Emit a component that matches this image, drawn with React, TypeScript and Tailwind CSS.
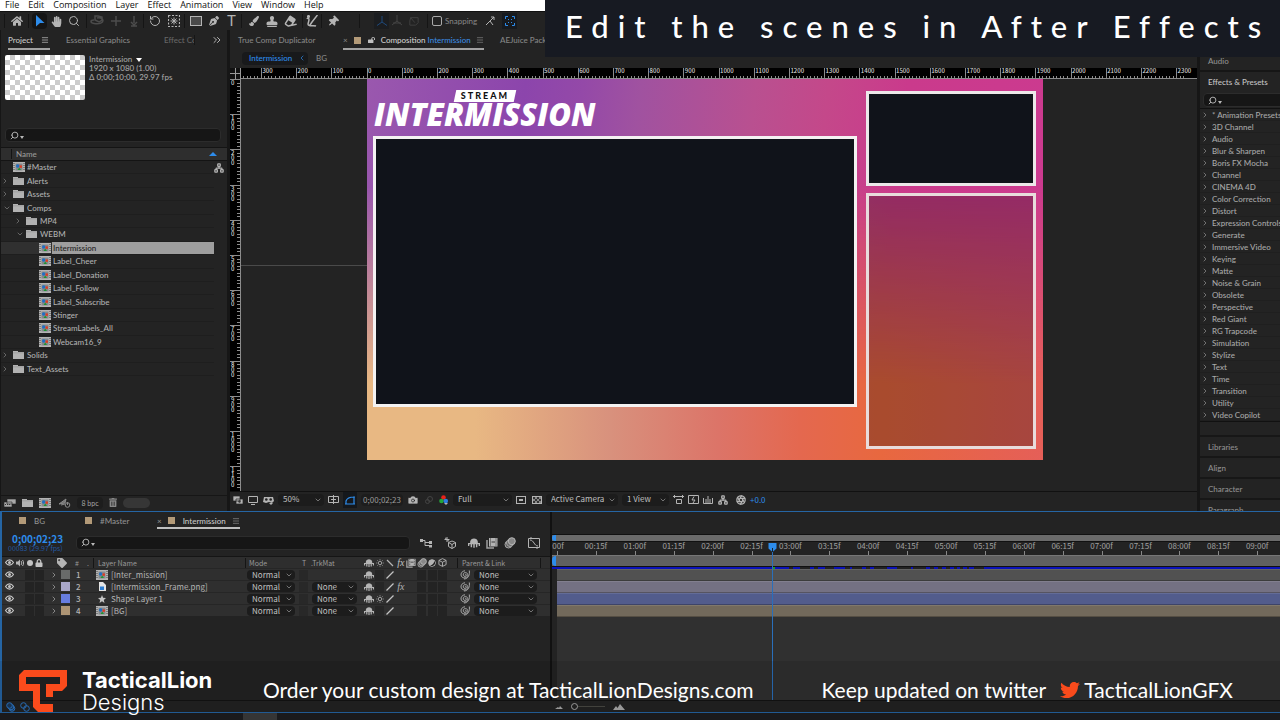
import type { ReactNode } from "react";
import { FaTwitter, FaHandPaper, FaStamp, FaEraser, FaPaintBrush, FaPenNib, FaThumbtack, FaHome, FaTrashAlt, FaLock, FaLockOpen, FaTag } from "react-icons/fa";
import { ChevronDown, ChevronRight, ChevronLeft, ChevronsRight, Menu, Search, RotateCcw, Network, Aperture, Camera } from "lucide-react";

const menus = ["File", "Edit", "Composition", "Layer", "Effect", "Animation", "View", "Window", "Help"];

const projectItems = [
  { name: "#Master", depth: 0, kind: "comp" },
  { name: "Alerts", depth: 0, kind: "folder" },
  { name: "Assets", depth: 0, kind: "folder" },
  { name: "Comps", depth: 0, kind: "open" },
  { name: "MP4", depth: 1, kind: "folder" },
  { name: "WEBM", depth: 1, kind: "open" },
  { name: "Intermission", depth: 2, kind: "comp", selected: true },
  { name: "Label_Cheer", depth: 2, kind: "comp" },
  { name: "Label_Donation", depth: 2, kind: "comp" },
  { name: "Label_Follow", depth: 2, kind: "comp" },
  { name: "Label_Subscribe", depth: 2, kind: "comp" },
  { name: "Stinger", depth: 2, kind: "comp" },
  { name: "StreamLabels_All", depth: 2, kind: "comp" },
  { name: "Webcam16_9", depth: 2, kind: "comp" },
  { name: "Solids", depth: 0, kind: "folder" },
  { name: "Text_Assets", depth: 0, kind: "folder" },
];

const indents = ["pl-0", "pl-[13px]", "pl-[26px]"];

const effects = [
  "* Animation Presets", "3D Channel", "Audio", "Blur & Sharpen", "Boris FX Mocha", "Channel", "CINEMA 4D",
  "Color Correction", "Distort", "Expression Controls", "Generate", "Immersive Video", "Keying", "Matte",
  "Noise & Grain", "Obsolete", "Perspective", "Red Giant", "RG Trapcode", "Simulation", "Stylize", "Text",
  "Time", "Transition", "Utility", "Video Copilot",
];

const layers = [
  { id: 1, name: "[Inter_mission]", kind: "comp", swatch: "bg-[#686a69]", bar: "bg-[#515151]", trk: false, fx: false, sun: false },
  { id: 2, name: "[Intermission_Frame.png]", kind: "png", swatch: "bg-[#a9a7c9]", bar: "bg-[#747183]", trk: true, fx: true, sun: false },
  { id: 3, name: "Shape Layer 1", kind: "shape", swatch: "bg-[#677de0]", bar: "bg-[#525c8c]", trk: true, fx: false, sun: true },
  { id: 4, name: "[BG]", kind: "comp", swatch: "bg-[#ad9474]", bar: "bg-[#72695b]", trk: true, fx: false, sun: false },
];

const layerGrid = "grid grid-cols-[14px_9px_10px_10px_12px_14px_22px_152px_53px_11px_55px_84px_9px_94px] items-center text-left";

const times = [
  ":00f", "00:15f", "01:00f", "01:15f", "02:00f", "02:15f", "03:00f", "03:15f", "04:00f", "04:15f",
  "05:00f", "05:15f", "06:00f", "06:15f", "07:00f", "07:15f", "08:00f", "08:15f", "09:00f",
];

const cacheGaps = [
  [237, 4], [248, 10], [262, 4], [273, 9], [293, 5], [300, 10], [314, 4], [322, 10], [332, 3], [345, 14], [361, 13], [378, 4], [386, 4], [394, 4], [402, 3], [408, 3], [415, 2], [422, 10],
];

function CompIcon() {
  return (
    <svg className="w-3 h-2.5 shrink-0" viewBox="0 0 12 10">
      <rect width="12" height="10" fill="#b4b4b4" />
      <rect x="2.5" y="1.5" width="7" height="7" fill="#83888c" />
      <path d="M1 1v8M11 1v8" stroke="#444" strokeDasharray="1 1" />
      <circle cx="4.700" cy="4" r="1.700" fill="#1f6fc4" />
      <rect x="6.500" y="3.400" width="2.400" height="2.400" fill="#e0391f" />
      <path d="M4.500 8l1.700-2.500L8 8z" fill="#1f9430" />
    </svg>
  );
}

function FolderIcon() {
  return (
    <svg className="w-[11px] h-2 shrink-0" viewBox="0 0 11 8">
      <path d="M0 0h5v1h6v7H0z" fill="#b2b2b2" />
      <path d="M0 1.800h11" stroke="#8b8b8b" strokeWidth=".5" />
    </svg>
  );
}

function EyeIcon() {
  return (
    <svg className="w-[9px] h-[7px]" viewBox="0 0 9 7">
      <path d="M.5 3.500C2 1.200 3.200.8 4.500.8s2.500.4 4 2.700c-1.500 2.300-2.700 2.700-4 2.700S2 5.800.5 3.500z" fill="none" stroke="#c4c4c4" strokeWidth="1.200" />
      <circle cx="4.500" cy="3.500" r="1.500" fill="#c4c4c4" />
    </svg>
  );
}

function ShyIcon({ className = "w-2.5 h-2" }: { className?: string }) {
  return (
    <svg className={className} viewBox="0 0 10 8">
      <path d="M1.800 4.500V3C2-.8 8-.8 8.200 3v1.500z" fill="#b4b4b4" />
      <path d="M0 4.500h10M.5 4v2.500M9.500 4v2.500M5 3v5M2.800 4v3.500M7.200 4v3.500" stroke="#b4b4b4" strokeWidth="1.200" />
    </svg>
  );
}

function SunIcon() {
  return (
    <svg className="w-2 h-2" viewBox="0 0 8 8">
      <circle cx="4" cy="4" r="1.700" fill="none" stroke="#999" />
      <path d="M4 0v1.500M4 6.500V8M0 4h1.500M6.500 4H8M1.200 1.200l1 1M5.800 5.800l1 1M6.800 1.200l-1 1M2.200 5.800l-1 1" stroke="#999" strokeWidth=".7" />
    </svg>
  );
}

function BlurIcon({ className }: { className: string }) {
  return (
    <svg className={className} viewBox="0 0 12 12">
      <circle cx="4.500" cy="7.500" r="3.500" fill="#555" stroke="#a6a6a6" />
      <circle cx="6" cy="6" r="3.500" fill="#666" stroke="#a6a6a6" />
      <circle cx="7.800" cy="4.200" r="3.500" fill="#888" stroke="#b8b8b8" />
    </svg>
  );
}

function CubeIcon({ className }: { className: string }) {
  return (
    <svg className={className} viewBox="0 0 10 10" fill="none" stroke="#b4b4b4">
      <path d="M5 .7l4 2v4.600l-4 2-4-2V2.700zM1 2.700l4 2 4-2M5 4.700v4.600" />
    </svg>
  );
}

function FilmIcon({ className }: { className: string }) {
  return (
    <svg className={className} viewBox="0 0 12 12">
      <path d="M1 3v8h7" fill="none" stroke="#a0a0a0" strokeWidth="1.500" />
      <rect x="3" y="1" width="8.500" height="8.500" fill="#b4b4b4" />
      <path d="M4.500 1.500v8M10 1.500v8" stroke="#3a3a3a" strokeDasharray="1 1" />
      <path d="M5.500 5h3.500" stroke="#3a3a3a" />
    </svg>
  );
}

function Swirl() {
  return (
    <svg className="w-2.5 h-2.5" viewBox="0 0 10 10" fill="none" stroke="#a8a8a8">
      <path d="M5 4.500c1-.8 2 .6 1 1.500-1.200 1-3.200 0-2.700-1.900C3.900 2 7.200 1.900 7.700 4.500c.5 3-3.500 4.600-5.700 2.500C-.2 4.700 1.500 1 5 .8M9.300.5c.6 4-.8 8.300-5.300 8.500" />
    </svg>
  );
}

function SearchBox({ label, className }: { label: string; className: string }) {
  return (
    <label className={`flex items-center gap-px pl-1 bg-[#161616] border border-[#2c2c2c] rounded-sm ${className}`}>
      <Search className="w-[9px] h-[9px] -scale-x-100 text-[#b8b8b8]" strokeWidth={2.5} />
      <span className="border-x-2 border-t-3 border-x-transparent border-t-[#b8b8b8] mt-1" />
      <input aria-label={label} className="min-w-0 flex-1 h-full bg-transparent outline-none" />
    </label>
  );
}

function Dropdown({ label, value, className }: { label: string; value: string; className: string }) {
  return (
    <span className={`relative flex items-center bg-[#1c1c1c] rounded-sm ${className}`}>
      <select aria-label={label} className="appearance-none w-full h-full pl-[5px] pb-0.5 leading-[10px] bg-transparent text-[#c0c0c0] outline-none">
        <option>{value}</option>
      </select>
      <ChevronDown className="absolute right-0.5 w-2 h-2 text-[#a0a0a0] pointer-events-none" />
    </span>
  );
}

function Tool({ label, children, className = "" }: { label: string; children: ReactNode; className?: string }) {
  return (
    <button aria-label={label} className={`flex items-center justify-center h-4 shrink-0 ${className}`}>
      {children}
    </button>
  );
}

function Divider() {
  return <span className="w-px h-3.5 bg-[#151515] shrink-0" />;
}

function Toolbar() {
  return (
    <div className="h-[19px] shrink-0 flex items-center bg-[#232323] border-t border-[#111] text-[#b4b4b4] pl-1">
      <Divider />
      <Tool label="Home" className="w-[23px]"><FaHome className="w-3 h-3" /></Tool>
      <Divider />
      <Tool label="Selection" className="w-[15px] ml-[3px] bg-[#151515] rounded-sm">
        <svg className="w-2.5 h-3" viewBox="0 0 10 12"><path d="M1 0l8.500 8H5L1 11.500z" fill="#2d8ceb" /></svg>
      </Tool>
      <Tool label="Hand" className="w-[18px]"><FaHandPaper className="w-[11px] h-[11px]" /></Tool>
      <Tool label="Zoom" className="w-[17px]"><Search className="w-3 h-3" /></Tool>
      <span className="w-1" />
      <Divider />
      <span className="flex text-[#4c4c4c]">
        <Tool label="Orbit camera" className="w-5">
          <svg className="w-3.5 h-3" viewBox="0 0 14 12" fill="none" stroke="currentColor" strokeWidth="1.500"><path d="M4 5C0 5 0 8 4 8.500c6 1 9-1 9-3S9 2 7 3M5 1v4l4 2 3-2V2L8 1z" /></svg>
        </Tool>
        <Tool label="Pan camera" className="w-[18px]">
          <svg className="w-3 h-3" viewBox="0 0 12 12" stroke="currentColor" strokeWidth="1.500"><path d="M6 1v10M1 6h10" /></svg>
        </Tool>
        <Tool label="Dolly camera" className="w-[18px]">
          <svg className="w-3 h-3" viewBox="0 0 12 12" stroke="currentColor" strokeWidth="1.500" fill="none"><path d="M6 1v7M3 7l3 3 3-3M3 11h6" /></svg>
        </Tool>
      </span>
      <Divider />
      <Tool label="Rotation" className="w-[22px]"><RotateCcw className="w-3 h-3" /></Tool>
      <Tool label="Pan behind" className="w-4">
        <svg className="w-3 h-3" viewBox="0 0 12 12" stroke="currentColor" fill="none"><rect x=".5" y=".5" width="11" height="11" strokeDasharray="2 1.500" strokeWidth="1.200" /><path d="M6 2.500v7M2.500 6h7M3.500 3.500l5 5M8.500 3.500l-5 5" /></svg>
      </Tool>
      <span className="w-0.5" />
      <Divider />
      <Tool label="Rectangle" className="w-[21px]"><span className="w-3 h-2.5 bg-[#4a4a4a] border border-[#b4b4b4]" /></Tool>
      <Tool label="Pen" className="w-4"><FaPenNib className="w-2.5 h-2.5" /></Tool>
      <Tool label="Type" className="w-[19px] text-[15px] leading-none font-[Roboto]">T</Tool>
      <Divider />
      <Tool label="Brush" className="w-6"><FaPaintBrush className="w-2.5 h-2.5" /></Tool>
      <Tool label="Clone stamp" className="w-3"><FaStamp className="w-3 h-[11px]" /></Tool>
      <Tool label="Eraser" className="w-6"><FaEraser className="w-3 h-3 -rotate-12" /></Tool>
      <Divider />
      <Tool label="Roto brush" className="w-[18px]"><svg className="w-3 h-3" viewBox="0 0 12 12" fill="none" stroke="currentColor" strokeWidth="1.500"><path d="M11.500 0L6 7M6 7l-2 3M1 4c1-2 2-1 2 1l-1 4c0 3 6 1 8 2" /><circle cx="2.500" cy="1.500" r=".8" fill="currentColor" /></svg></Tool>
      <Divider />
      <Tool label="Puppet pin" className="w-[21px]"><FaThumbtack className="w-2.5 h-[11px] rotate-45" /></Tool>
      <span className="w-4" />
      <Divider />
      <span className="w-3.5" />
      <Tool label="Local axis" className="w-[15px] bg-[#1b1d20]"><svg className="w-3 h-3" viewBox="0 0 12 12" fill="none" stroke="#1f4a7c"><path d="M6 1v6L1 10.500M6 7l5 3.500" /></svg></Tool>
      <Tool label="World axis" className="w-4 text-[#444]"><svg className="w-3 h-3" viewBox="0 0 12 12" fill="none" stroke="currentColor"><path d="M6 0v6L1 10M6 6l5 4M2 8h8" /></svg></Tool>
      <Tool label="View axis" className="w-[18px] text-[#444]"><svg className="w-2.5 h-3" viewBox="0 0 12 12" fill="none" stroke="currentColor"><path d="M2 2h9v6L8 11H1V6zM2 2l5 6" /></svg></Tool>
      <span className="w-1" />
      <Divider />
      <label className="flex items-center gap-[3px] ml-1 text-[#888] font-[Lato]">
        <input type="checkbox" className="appearance-none w-2.5 h-2.5 border border-[#aaa] rounded-xs" />
        Snapping
      </label>
      <Tool label="Snap edges" className="w-[25px]"><svg className="w-2.5 h-2.5" viewBox="0 0 10 10" fill="none" stroke="currentColor"><path d="M1 9l4-4 3 4M5 5l4-4M6 1h3v3" /></svg></Tool>
      <Tool label="Snap extents" className="w-[15px] bg-[#171a1e]"><svg className="w-2.5 h-2.5" viewBox="0 0 10 10" fill="none" stroke="#2d8ceb"><path d="M.5 3V.5H3M7 .5h2.500V3M9.500 7v2.500H7M3 9.500H.5V7M3 3l1 1M7 3L6 4M3 7l1-1M7 7L6 6" /></svg></Tool>
    </div>
  );
}

function ProjectPanel() {
  return (
    <section className="w-[227px] shrink-0 flex flex-col bg-[#232323] border-l border-[#161616] font-[Lato] font-medium">
      <div className="h-5 flex items-center shrink-0">
        <button className="flex items-center gap-2 h-[19px] pt-0.5 ml-[7px] border-b-2 border-[#a2a2a2] text-[#c8c8c8] pr-px">
          Project <Menu className="w-2 h-2" />
        </button>
        <button className="ml-4 text-[#858585]">Essential Graphics</button>
        <button className="ml-auto w-[31px] overflow-hidden whitespace-nowrap text-left text-[#666] border-r border-[#161616]">Effect Controls</button>
        <ChevronsRight className="w-3 h-3 ml-4 mr-1 text-[#b4b4b4]" />
      </div>
      <div className="flex gap-1 mt-[5px] ml-1 text-[#a5a5a5] leading-[9px]">
        <div className="w-20 h-[45px] rounded-xs bg-[repeating-conic-gradient(#ccc_0_25%,#fff_0_50%)] bg-size-[10px_10px]" />
        <div>
          <h2 className="flex items-center gap-1">Intermission <span className="border-x-3 border-t-4 border-x-transparent border-t-white" /></h2>
          <p>1920 x 1080 (1.00)</p>
          <p>Δ 0;00;10;00, 29.97 fps</p>
        </div>
      </div>
      <SearchBox label="Search project" className="mt-[28px] ml-1 mr-1.5 h-3.5 shrink-0" />
      <div className="flex items-center h-[14px] mt-[5px] shrink-0 pl-2.5 bg-[#2e2e2e] border-y border-[#141414] text-[#9a9a9a]">
        <span className="border-l border-[#141414] pl-1">Name</span>
        <span className="ml-auto mr-2.5 border-x-4 border-b-4 border-x-transparent border-b-[#2d8ceb]" />
      </div>
      <div className="flex shrink-0">
        <ul className="flex-1 h-[215px] flex flex-col text-[#b0b0b0]">
          {projectItems.map((item) => (
            <li key={item.name} className={`flex-1 flex items-center border-b border-[#1e1e1e] ${indents[item.depth]} ${item.selected ? "bg-[#303030]" : ""}`}>
              <span className="w-3 flex justify-center shrink-0 text-[#888]">
                {item.kind === "folder" && <ChevronRight className="w-2 h-2 -ml-1" />}
                {item.kind === "open" && <ChevronDown className="w-2 h-2" />}
              </span>
              {item.kind === "comp" ? <CompIcon /> : <FolderIcon />}
              <span className={item.selected ? "flex-1 h-full flex items-center ml-px pl-px bg-[#9e9e9e] text-[#222]" : item.kind === "comp" ? "ml-0.5" : "ml-[3px]"}>{item.name}</span>
            </li>
          ))}
        </ul>
        <div className="w-[13px] pt-px"><Network className="w-2.5 h-2.5 mt-px text-[#b4b4b4]" strokeWidth={3} /></div>
      </div>
      <div className="mt-auto h-4 pb-0.5 flex items-center gap-1.5 pl-[3px] border-t border-[#161616] text-[#b0b0b0]">
        <Tool label="Interpret footage"><svg className="w-3 h-2.5" viewBox="0 0 12 10"><path d="M3 1h9v5H3zM0 4h8v5H0z" fill="#a8a8a8" stroke="#232323" strokeWidth=".6" /><path d="M1 6.500h6" stroke="#333" strokeDasharray="1 1" /></svg></Tool>
        <Tool label="New folder"><FolderIcon /></Tool>
        <Tool label="New composition"><CompIcon /></Tool>
        <Tool label="Project settings" className="ml-0.5"><svg className="w-3 h-2.5" viewBox="0 0 12 10" fill="none" stroke="#8a8a8a"><path d="M0 6l7-5-1 4zM2 7l4-1" fill="#777" /><circle cx="8.500" cy="7" r="2.300" /><path d="M8.500 4v3" /></svg></Tool>
        <button className="w-[26px] h-3 text-[7px] text-[#9a9a9a] bg-[#1d1d1d] rounded-sm">8 bpc</button>
        <Tool label="Delete"><FaTrashAlt className="w-2 h-[9px] text-[#888]" /></Tool>
        <span className="w-[27px] h-2.5 rounded-full bg-[#363636]" />
      </div>
    </section>
  );
}

function HorizontalRuler() {
  return (
    <svg className="w-full h-[11px] shrink-0 bg-black" shapeRendering="crispEdges">
      {Array.from({ length: 268 }, (_, i) => i - 35).map((i) => (
        <path key={i} d={`M${137 + i * 3.52} ${i % 10 === 0 ? 0 : 8}V11`} stroke="#8c8c8c" />
      ))}
      {Array.from({ length: 27 }, (_, i) => i - 3).map((n) => (
        <text key={n} x={138 + n * 35.2} y="5" fontSize="6" fontWeight="500" fill="#d8d8d8">{Math.abs(n * 100)}</text>
      ))}
      <path d="M0 10.500H967" stroke="#8c8c8c" />
      <path d="M0 0h11v11H0z" fill="#111" />
      <path d="M0 5.500h11M5.500 0v11M10.500 0v11" stroke="#999" />
    </svg>
  );
}

function VerticalRuler() {
  return (
    <svg className="w-[11px] h-full shrink-0 bg-black" shapeRendering="crispEdges">
      {Array.from({ length: 118 }, (_, i) => i).map((i) => (
        <path key={i} d={`M${i % 10 === 0 ? 0 : 7} ${i * 3.52 + 0.5}H11`} stroke="#8c8c8c" />
      ))}
      {Array.from({ length: 12 }, (_, n) =>
        String(n * 100).split("").map((digit, k) => (
          <text key={`${n}-${k}`} x="1" y={6 + n * 35.2 + k * 5} fontSize="6" fontWeight="500" fill="#d8d8d8">{digit}</text>
        )),
      )}
      <path d="M10.500 0v500" stroke="#8c8c8c" />
    </svg>
  );
}

function Artboard() {
  return (
    <div className="relative isolate w-[676px] h-[381px] shrink-0 flex gap-[9px] pl-1.5 pr-[7px] bg-[linear-gradient(97deg,#9a58ae_0%,#8c45ac_22%,#9449a8_30%,#a052a0_38%,#b95090_54%,#c4488a_64%,#ca3a8c_75%,#cc3a90_100%)]">
      <div className="absolute inset-0 -z-10 bg-[linear-gradient(to_right,#e8b883_0%,#e8b883_16%,#d8917d_36%,#dc7468_52%,#e4684f_64%,#e8683f_76%,#e55f58_100%)] mask-[linear-gradient(to_bottom,transparent_28%,black_80%)]" />
      <div className="flex-1 flex flex-col">
        <div className="h-[57px] pt-[11px] pl-px text-white">
          <p className="relative isolate w-[60px] h-3 ml-[81px] text-center text-[9px] leading-3 font-black tracking-[2px] text-[#111] font-[Lato]">
            <span className="absolute inset-0 -z-10 bg-white -skew-x-12" />
            STREAM
          </p>
          <h1 className="text-[31px] leading-6 font-extrabold italic whitespace-nowrap font-['Open_Sans']">INTERMISSION</h1>
        </div>
        <div className="h-[271px] border-3 border-[#f4f2f2] bg-[#10131a]" />
      </div>
      <div className="w-[170px] flex flex-col gap-[7px] pt-3">
        <div className="h-[95px] border-3 border-[#ece8e9] bg-[#10131a]" />
        <div className="h-64 border-3 border-[#e8dcdc] bg-black/27" />
      </div>
    </div>
  );
}

function ViewerControls() {
  return (
    <div className="h-5 pb-[3px] shrink-0 flex items-center border-t border-[#111] text-[#b4b4b4] pl-[3px] gap-1">
      <Tool label="Always preview"><svg className="w-2.5 h-2" viewBox="0 0 10 8"><path d="M0 0h7v5H0zM3 3h7v5H3z" fill="#b4b4b4" stroke="#232323" strokeWidth=".7" /><circle cx="6.500" cy="5.500" r="1.200" fill="#333" /></svg></Tool>
      <Tool label="Display" className="ml-px"><svg className="w-2.5 h-[9px]" viewBox="0 0 10 9" fill="none" stroke="#b4b4b4"><path d="M.5.5h9v6h-9zM3 8.500h4" /></svg></Tool>
      <Tool label="Stereo view" className="ml-px"><svg className="w-[11px] h-[9px]" viewBox="0 0 11 9"><path d="M1 1h9l1 4-2 2-3-1-3 1-3-1z" fill="#b4b4b4" /><circle cx="3.300" cy="3.500" r="1.300" fill="#232323" /><circle cx="7.700" cy="3.500" r="1.300" fill="#232323" /><path d="M6 7h4L8 9z" fill="#b4b4b4" /></svg></Tool>
      <Dropdown label="Magnification" value="50%" className="w-[46px] h-3" />
      <Tool label="Grid options"><svg className="w-[11px] h-2.5" viewBox="0 0 11 10" fill="none" stroke="#b4b4b4"><path d="M.5 1.500h10v6H.5zM5.500 0v9M3 4.500h5" /></svg></Tool>
      <Tool label="Mask visibility" className="w-3.5 bg-[#15181c]"><svg className="w-2.5 h-[9px]" viewBox="0 0 10 9" fill="none" stroke="#2d8ceb" strokeWidth="1.200"><path d="M1 8V5C2 2 5 1 9 1v7H1M0 8h2M8 1h2M8 8h2" /></svg></Tool>
      <button className="w-[42px] h-3 bg-[#1d1d1d] text-[#9a9a9a] rounded-sm">0;00;02;23</button>
      <Tool label="Snapshot"><Camera className="w-3 h-3 fill-[#b4b4b4] text-[#232323]" strokeWidth={1.5} /></Tool>
      <Tool label="Show snapshot" className="w-3"><svg className="w-2 h-2" viewBox="0 0 8 8" fill="none" stroke="#444"><circle cx="5" cy="3" r="2.500" /><circle cx="2.500" cy="5.500" r="2" /></svg></Tool>
      <Tool label="Channels"><svg className="w-2.5 h-2.5" viewBox="0 0 10 10"><circle cx="4.500" cy="2.500" r="2.300" fill="#e8231a" /><circle cx="2.500" cy="6" r="2.300" fill="#22a63a" /><circle cx="6.800" cy="6" r="2.300" fill="#2d7de0" /><path d="M5 8h4L7 10z" fill="#b4b4b4" /></svg></Tool>
      <Dropdown label="Resolution" value="Full" className="w-[59px] h-3" />
      <Tool label="Region of interest"><span className="w-2.5 h-2 border border-[#b4b4b4] p-0.5"><span className="block w-full h-full bg-[#b4b4b4]" /></span></Tool>
      <Tool label="Transparency grid" className="ml-0.5"><span className="w-2.5 h-2 border border-[#b4b4b4] bg-[repeating-conic-gradient(#888_0_25%,#333_0_50%)] bg-size-[4px_4px]" /></Tool>
      <Dropdown label="Camera" value="Active Camera" className="w-[72px] h-3" />
      <Dropdown label="View layout" value="1 View" className="w-[47px] h-3" />
      <Tool label="Pixel aspect"><svg className="w-[11px] h-2.5" viewBox="0 0 11 10" fill="none" stroke="#b4b4b4"><path d="M0 1.500h11M1.500 0v3M9.500 0v3M3.500 4.500h5v4h-5z" /></svg></Tool>
      <Tool label="Fast previews"><svg className="w-[11px] h-2.5" viewBox="0 0 11 10" fill="none" stroke="#b4b4b4"><path d="M.5.5h10v8H.5zM6 1.500L4 5h3L5 8" /></svg></Tool>
      <Tool label="Timeline"><svg className="w-2.5 h-2.5" viewBox="0 0 10 10" fill="none" stroke="#b4b4b4"><path d="M.5 3v5.500h9V3M3 8V4M5 8V1M7 8V4" /></svg></Tool>
      <Tool label="Flowchart" className="ml-px"><Network className="w-2.5 h-2.5" strokeWidth={3} /></Tool>
      <Tool label="Exposure" className="ml-1"><Aperture className="w-2.5 h-2.5" strokeWidth={3} /></Tool>
      <span className="text-[#2d8ceb]">+0.0</span>
    </div>
  );
}

function CompositionPanel() {
  return (
    <section className="flex-1 min-w-0 flex flex-col bg-[#232323] mx-[3px]">
      <div className="h-5 shrink-0 flex items-center whitespace-nowrap text-[#858585] font-[Lato] font-medium">
        <button className="ml-2 w-[105px] text-left">True Comp Duplicator</button>
        <div className="w-[141px] h-[19px] pt-0.5 flex items-center border-b-2 border-[#a2a2a2]">
          <button aria-label="Close">×</button>
          <span className="w-[7px] h-[7px] ml-1.5 bg-[#b39a78]" />
          <FaLockOpen className="w-[7px] h-2 ml-[7px] mr-1.5 text-[#c0c0c0]" />
          <span className="text-[#d0d0d0]">Composition <span className="text-[#3b8be0]">Intermission</span></span>
          <Menu className="w-2 h-2 ml-auto" />
        </div>
        <button className="ml-4">AEJuice Pack Manager</button>
      </div>
      <div className="h-[14px] shrink-0 flex items-center ml-3 mt-px mb-[3px] text-[#858585] font-[Lato] font-medium">
        <span className="w-[66px] h-[13px] flex items-center justify-between pl-[7px] pr-0.5 rounded-sm bg-[#18191b] text-[#2d8ceb]">
          Intermission <ChevronLeft className="w-2 h-2" />
        </span>
        <span className="ml-2">BG</span>
      </div>
      <HorizontalRuler />
      <div className="flex-1 min-h-0 flex">
        <VerticalRuler />
        <div className="relative isolate flex-1 min-w-0 flex items-start pl-[126px] overflow-hidden">
          <span className="absolute left-0 top-[186px] -z-10 w-32 h-px bg-[#4a4a4a]" />
          <Artboard />
        </div>
      </div>
      <ViewerControls />
    </section>
  );
}

function EffectsPanel() {
  return (
    <aside className="w-20 shrink-0 flex flex-col bg-[#232323] overflow-hidden whitespace-nowrap text-[#909090] font-[Lato] font-medium">
      <h2 className="h-[42px] shrink-0 flex items-end pb-1 pl-2 border-b-2 border-[#161616]">Audio</h2>
      <h2 className="h-5 shrink-0 flex items-center pl-2 text-[#c4c4c4]">Effects &amp; Presets</h2>
      <SearchBox label="Search effects" className="h-3.5 shrink-0 ml-[3px] mt-px -mr-1" />
      <ul className="mt-px border-y border-[#111] text-[#a8a8a8]">
        {effects.map((name) => (
          <li key={name} className="h-3 flex items-center gap-[3px] pl-px border-b border-[#1f1f1f]">
            <ChevronRight className="w-2 h-2 text-[#999] shrink-0" />
            {name}
          </li>
        ))}
      </ul>
      <div className="h-[15px] shrink-0 border-b-2 border-[#171717]" />
      {["Libraries", "Align", "Character", "Paragraph"].map((name) => (
        <h2 key={name} className="h-[21px] shrink-0 flex items-center pl-2 border-b-2 border-[#171717]">{name}</h2>
      ))}
    </aside>
  );
}

function LayerTable() {
  return (
    <table className="block w-full text-[#9a9a9a]">
      <thead className="block">
        <tr className={`${layerGrid} h-3 bg-[#2e2e2e] border-t border-[#151515] text-[7px]`}>
          <th className="pl-[3px]"><EyeIcon /></th>
          <th><svg className="w-2 h-2" viewBox="0 0 8 8"><path d="M0 2.500h2L4 .5v7L2 5.500H0z" fill="#b4b4b4" /><path d="M5 2c1 1 1 3 0 4M6.500 1c1.500 2 1.500 4 0 6" fill="none" stroke="#b4b4b4" /></svg></th>
          <th><span className="block w-1.5 h-1.5 ml-0.5 rounded-full bg-[#c4c4c4]" /></th>
          <th><FaLock className="w-2 h-2 text-[#c4c4c4]" /></th>
          <th />
          <th><FaTag className="w-2.5 h-2.5 text-[#b4b4b4]" /></th>
          <th className="pl-1 font-normal flex justify-between pr-1"><span>#</span><span>.</span></th>
          <th className="pl-1 font-normal border-l border-[#151515]">Layer Name</th>
          <th className="pl-[3px] font-normal border-l border-[#151515]">Mode</th>
          <th className="pl-1 font-normal">T</th>
          <th className="pl-0.5 font-normal">.TrkMat</th>
          <th className="grid grid-cols-8 items-center justify-items-center">
            <ShyIcon />
            <SunIcon />
            <svg className="w-2 h-2" viewBox="0 0 8 8"><path d="M1 1l6 6" stroke="#b4b4b4" strokeWidth="1.200" /></svg>
            <i className="font-[Liberation_Serif] font-normal text-[10px] leading-none text-[#c0c0c0]">fx</i>
            <FilmIcon className="w-2.5 h-2.5" />
            <BlurIcon className="w-2.5 h-2.5" />
            <svg className="w-2 h-2" viewBox="0 0 8 8"><circle cx="4" cy="4" r="3.300" fill="#b4b4b4" stroke="#b4b4b4" /><path d="M4 1a3 3 0 010 6 4 4 0 000-6z" fill="#232323" transform="rotate(45 4 4)" /></svg>
            <CubeIcon className="w-[9px] h-[9px]" />
          </th>
          <th />
          <th className="pl-1 mr-2.5 font-normal border-x border-[#151515]">Parent &amp; Link</th>
        </tr>
      </thead>
      <tbody className="block">
        {layers.map((layer) => (
          <tr key={layer.id} className={`${layerGrid} h-3 bg-[#2f2f2f] border-t border-[#262626] text-[#b4b4b4]`}>
            <td className="pl-[3px]"><EyeIcon /></td>
            <td />
            <td><span className="block w-[9px] h-2.5 bg-[#232323]" /></td>
            <td><span className="block w-[9px] h-2.5 bg-[#232323]" /></td>
            <td><ChevronRight className="w-2 h-2 ml-[5px]" /></td>
            <td className="pl-0.5"><span className={`block w-[9px] h-[9px] ml-0.5 ${layer.swatch}`} /></td>
            <td className="pl-[5px] font-medium">{layer.id}</td>
            <td className="flex items-center gap-[3px] pl-[3px]">
              <span className="w-3 flex justify-center">
                {layer.kind === "comp" && <CompIcon />}
                {layer.kind === "png" && <svg className="w-2 h-[9px]" viewBox="0 0 8 9"><path d="M1 0h4l3 3v6H1z" fill="#e4e4e4" /><path d="M2 4.500h4V8H2z" fill="#2d7dd0" /></svg>}
                {layer.kind === "shape" && <svg className="w-2 h-2" viewBox="0 0 8 8"><path d="M4 0l1.100 2.800L8 3 5.800 4.900 6.500 8 4 6.300 1.500 8l.7-3.100L0 3l2.900-.2z" fill="#c4c4c4" /></svg>}
              </span>
              {layer.name}
            </td>
            <td className="pl-0.5"><Dropdown label={`Mode of layer ${layer.id}`} value="Normal" className="w-12 h-2.5" /></td>
            <td><span className="block w-[9px] h-2.5 ml-px bg-[#282828]" /></td>
            <td className="pl-[3px]">{layer.trk && <Dropdown label={`Track matte of layer ${layer.id}`} value="None" className="w-[45px] h-2.5" />}</td>
            <td className="grid grid-cols-8 items-center justify-items-center">
              <ShyIcon />
              {layer.sun ? <SunIcon /> : <span className="w-[9px] h-2.5 bg-[#262626]" />}
              <svg className="w-2 h-2" viewBox="0 0 8 8"><path d="M.5 7.500l7-7" stroke="#c4c4c4" strokeWidth="1.200" /></svg>
              <i className="font-[Liberation_Serif] text-[10px] leading-none">{layer.fx ? "fx" : ""}</i>
              <span />
              <span className="w-[9px] h-2.5 bg-[#232323]" />
              <span className="w-[9px] h-2.5 bg-[#232323]" />
              <span className="w-[9px] h-2.5 bg-[#232323]" />
            </td>
            <td />
            <td className="flex items-center gap-1 pl-[3px]">
              <Swirl />
              <Dropdown label={`Parent of layer ${layer.id}`} value="None" className="w-[63px] h-2.5" />
            </td>
          </tr>
        ))}
      </tbody>
    </table>
  );
}

function TimeGraph() {
  return (
    <div className="relative flex-1 min-w-0 flex flex-col bg-[#232323] overflow-hidden">
      <div className="mt-[22px] h-1.5 bg-[#6a6a6a] border-y border-[#111] box-content flex justify-start">
        <span className="w-1 rounded-l-full bg-[#2d8ceb]" />
      </div>
      <svg className="w-full h-[13px]">
        {times.map((time, i) => (
          <g key={time}>
            <text x={5 + i * 38.9} y="7" textAnchor="middle" fontSize="8" fill="#a0a0a0">{time}</text>
            <path d={`M${Math.round(5 + i * 38.9) + 0.5} 9v4`} stroke="#888" />
          </g>
        ))}
      </svg>
      <div className="h-3 bg-[#606060] border-y border-y-[#111] border-t-[#777]"><span className="block w-1 h-full rounded-l-full bg-[#2d8ceb]" /></div>
      <svg className="w-full h-0.5 bg-[#0b12b8]" shapeRendering="crispEdges">
        {cacheGaps.map(([x, w]) => <path key={x} d={`M${x} 1h${w}`} stroke="#222" strokeWidth="2" />)}
        <path d="M220 1h3" stroke="#1e9c2a" strokeWidth="2" />
      </svg>
      <div className="flex-1 ml-[5px] bg-[#303030]">
        {layers.map((layer) => (
          <div key={layer.id} className={`h-3 border-t border-t-white/10 border-b border-b-black/25 ${layer.bar}`} />
        ))}
      </div>
      <div className="absolute left-[220px] top-[31px] bottom-0 w-px bg-[#2a6fba]">
        <svg className="absolute -left-1 top-0 w-[9px] h-[9px]" viewBox="0 0 9 9"><path d="M.5 0h8v5.500L4.500 9l-4-3.500z" fill="#2d8ceb" /><path d="M4.500 5v4" stroke="#123" /></svg>
      </div>
    </div>
  );
}

function Timeline() {
  return (
    <section className="h-[202px] shrink-0 flex flex-col bg-[#232323] border-y border-l-2 border-[#2565a4]">
      <div className="flex-1 min-h-0 flex">
        <div className="w-[550px] shrink-0 flex flex-col border-r-2 border-[#111]">
          <div className="h-[17px] flex items-center text-[#909090] font-[Lato] font-medium">
            <span className="w-[7px] h-[7px] ml-[17px] mr-2 bg-[#b39a78]" />
            <button className="w-[51px] text-left">BG</button>
            <span className="w-[7px] h-[7px] mr-2 bg-[#b39a78]" />
            <button className="w-[57px] text-left">#Master</button>
            <div className="h-[17px] pt-0.5 w-[83px] flex items-center border-b-2 border-[#c0c0c0]">
              <button aria-label="Close" className="mr-1.5">×</button>
              <span className="w-[7px] h-[7px] mr-2 bg-[#b39a78]" />
              <span className="text-[#c8c8c8]">Intermission</span>
              <Menu className="w-2 h-2 ml-auto" />
            </div>
          </div>
          <div className="h-[27px] flex items-center">
            <div className="w-[74px] pl-1.5">
              <p className="pl-1 text-[10px] leading-[11px] font-bold text-[#2d8ceb]">0;00;02;23</p>
              <p className="text-[7px] leading-[9px] text-[#2458a0]">00083 (29.97 fps)</p>
            </div>
            <SearchBox label="Search layers" className="w-[334px] h-3.5" />
            <div className="flex-1 flex items-center justify-between pl-2.5 pr-2">
              <Tool label="Mini flowchart"><svg className="w-3 h-2.5" viewBox="0 0 12 10" fill="none" stroke="#b4b4b4"><path d="M0 2.500h5v5h4M5 4.500h4" /><path d="M9 3h3v3H9zM9 7h3v2.500H9zM0 1h3v3H0z" fill="#b4b4b4" stroke="none" /></svg></Tool>
              <Tool label="Draft 3D" className="ml-1.5"><svg className="w-3 h-3" viewBox="0 0 12 12" fill="none" stroke="#b4b4b4"><path d="M8 4l3.500 1.500v4L8 11.500l-3.500-2v-4zM4.500 5.500L8 7.500l3.500-2M8 7.500v4M3 0v5M.5 2.500h5M1 .8l4 3.500" /></svg></Tool>
              <Tool label="Hide shy layers" className="ml-1.5"><ShyIcon className="w-3 h-2.5" /></Tool>
              <Tool label="Frame blending"><FilmIcon className="w-3 h-3" /></Tool>
              <Tool label="Motion blur"><BlurIcon className="w-3 h-3" /></Tool>
              <Tool label="Graph editor" className="ml-1.5 mr-0.5"><svg className="w-3 h-3" viewBox="0 0 12 12" fill="none" stroke="#b4b4b4"><path d="M.5 1.500h11v9H.5zM2 3c4 0 4 6 8 6M3 0v2M9 10v2" /></svg></Tool>
            </div>
          </div>
          <LayerTable />
        </div>
        <TimeGraph />
      </div>
      <div className="h-[12px] shrink-0 flex items-center pl-1 border-t border-[#141414]">
        <Tool label="Switches"><svg className="w-2.5 h-2.5" viewBox="0 0 10 10" fill="#1c3a5c" stroke="#2d78c8"><circle cx="6" cy="6.500" r="2.800" /><circle cx="5" cy="5" r="2.800" /><circle cx="3.500" cy="3.500" r="2.800" /></svg></Tool>
        <Tool label="Modes" className="ml-1"><svg className="w-2.5 h-2.5" viewBox="0 0 10 10" fill="none" stroke="#2d78c8"><circle cx="3.500" cy="3.500" r="2.800" /><circle cx="6.500" cy="6.500" r="2.800" /></svg></Tool>
        <svg className="w-2 h-1 ml-[525px] mr-2" viewBox="0 0 8 4"><path d="M0 4l3-2 1 1 1-2 3 3z" fill="#aaa" /></svg>
        <input type="range" aria-label="Timeline zoom" defaultValue={0} className="appearance-none w-[34px] h-px bg-[#4a4a44] [&::-webkit-slider-thumb]:appearance-none [&::-webkit-slider-thumb]:w-[7px] [&::-webkit-slider-thumb]:h-[7px] [&::-webkit-slider-thumb]:rounded-full [&::-webkit-slider-thumb]:border [&::-webkit-slider-thumb]:border-[#aaa] [&::-webkit-slider-thumb]:bg-[#232323]" />
        <svg className="w-3 h-1.5 ml-2" viewBox="0 0 12 6"><path d="M0 6l3-4 1.500 2L7 0l5 6z" fill="#aaa" /></svg>
      </div>
    </section>
  );
}

function Branding() {
  return (
    <footer className="absolute inset-x-0 bottom-0 h-[59px] flex items-center bg-black/10 text-white font-[Lato] text-[21px] leading-[22px]">
      <svg className="w-12 h-[42px] ml-[19px] shrink-0" viewBox="0 0 48 42">
        <path fillRule="evenodd" fill="#fa4b1c" d="M5 0h43v16l-5 5h-9v6h-7V14h14V7H7v7h14v20h13v8H19l-5-5V21H0V5z" />
      </svg>
      <div className="ml-[15px] w-[181px] shrink-0 font-[Inter] text-[22px]">
        <p className="font-bold">TacticalLion</p>
        <p className="font-light">Designs</p>
      </div>
      <p className="pb-0.5 whitespace-nowrap">Order your custom design at TacticalLionDesigns.com</p>
      <div className="ml-auto mr-[47px] pb-0.5 flex items-center whitespace-nowrap">
        Keep updated on twitter
        <FaTwitter className="w-5 h-5 ml-3.5 mr-1 text-[#fa4b1c]" />
        TacticalLionGFX
      </div>
    </footer>
  );
}

export default function App() {
  return (
    <div className="relative h-screen flex flex-col overflow-hidden bg-[#161616] font-['Noto_Sans_CJK_SC','Noto_Sans',sans-serif] text-[8px] leading-[10px]">
      <nav className="h-[11px] shrink-0 flex items-start gap-[9px] pl-[5px] bg-white text-[#111] text-[9px] leading-[9px] font-['Open_Sans']">
        {menus.map((menu) => <button key={menu}>{menu}</button>)}
      </nav>
      <Toolbar />
      <main className="flex-1 min-h-0 flex">
        <ProjectPanel />
        <CompositionPanel />
        <EffectsPanel />
      </main>
      <Timeline />
      <div className="h-[7px] shrink-0 flex bg-[#1d1e20]">
        <span className="w-[34px] ml-[243px] bg-[#3c3c3c]" />
      </div>
      <header className="absolute top-0 right-0 w-[735px] h-[57px] flex items-center pl-5 pb-1 bg-[#171a22] text-white">
        <p className="whitespace-nowrap font-[Lato] font-medium text-[31px] leading-none tracking-[9px]">Edit the scenes in After Effects</p>
      </header>
      <Branding />
    </div>
  );
}
